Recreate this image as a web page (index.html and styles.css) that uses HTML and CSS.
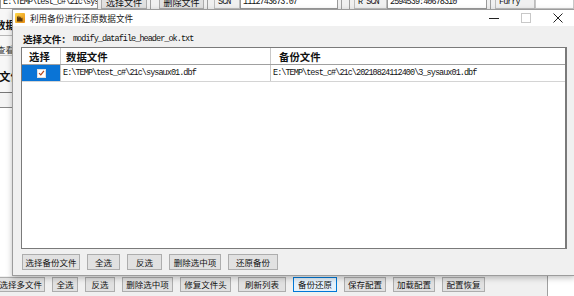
FILE: index.html
```html
<!DOCTYPE html>
<html lang="zh">
<head>
<meta charset="utf-8">
<title>利用备份进行还原数据文件</title>
<link rel="stylesheet" href="styles.css">
</head>
<body>
<div class="app">
  <div class="topbar">
    <div class="field f1 mono">E:\TEMP\test_c#\21c\sysaux01.dbf</div>
    <div class="tbtn b1">选择文件</div>
    <div class="sep"></div>
    <div class="tbtn b2">删除文件</div>
    <div class="sep"></div>
    <div class="lbl l1 mono">SCN</div>
    <div class="field f2 mono">1112743673.07</div>
    <div class="sep"></div>
    <div class="sep"></div>
    <div class="lbl l2 mono">R SCN</div>
    <div class="field f3 mono">2594539:40678310</div>
    <div class="sep"></div>
    <div class="lbl l3 mono">Furry</div>
    <div class="field f4"></div>
  </div>
  <div class="main">
    <div class="side">
      <div class="side-a">数据</div>
      <div class="side-b">查看</div>
      <div class="side-c">文件</div>
      <div class="side-list">
        <div class="side-head"></div>
      </div>
    </div>
  </div>
  <div class="bottombar">
    <div class="bbtn w-45 cut">选择多文件</div>
    <div class="bbtn w-24">全选</div>
    <div class="bbtn w-30">反选</div>
    <div class="bbtn w-51">删除选中项</div>
    <div class="bbtn w-51">修复文件头</div>
    <div class="bbtn w-48">刷新列表</div>
    <div class="bbtn w-44 focus">备份还原</div>
    <div class="bbtn w-42">保存配置</div>
    <div class="bbtn w-42">加载配置</div>
    <div class="bbtn w-43">配置恢复</div>
    <div class="bspacer"></div>
    <div class="bwhite"></div>
  </div>
</div>

<div class="dialog">
  <div class="titlebar">
    <svg class="appicon" width="10" height="10" viewBox="0 0 10 10">
      <defs>
        <linearGradient id="g" x1="0" y1="0" x2="1" y2="1">
          <stop offset="0" stop-color="#ffd84a"/>
          <stop offset="1" stop-color="#e58a12"/>
        </linearGradient>
      </defs>
      <rect x="0" y="0" width="10" height="10" rx="1" fill="url(#g)"/>
      <path d="M2 8.5 L2 4 L3.5 2.5 L3.5 5 L4.5 3 L5 5 L6 3.2 L6.3 5.5 L7.5 4.5 L7.6 8.5 Z" fill="#5a3a10"/>
    </svg>
    <span class="title">利用备份进行还原数据文件</span>
    <div class="controls">
      <div class="ctl"><svg width="10" height="10" viewBox="0 0 10 10"><path d="M0 5.5 H10" stroke="#222" stroke-width="1"/></svg></div>
      <div class="ctl"><svg width="10" height="10" viewBox="0 0 10 10"><rect x="0.5" y="0.5" width="9" height="9" fill="none" stroke="#c8c8c8" stroke-width="1"/></svg></div>
      <div class="ctl"><svg width="10" height="10" viewBox="0 0 10 10"><path d="M0.5 0.5 L9.5 9.5 M9.5 0.5 L0.5 9.5" stroke="#222" stroke-width="1"/></svg></div>
    </div>
  </div>
  <div class="dlg-body">
    <div class="filerow"><span class="filelbl">选择文件：</span><span class="mono filename">modify_datafile_header_ok.txt</span></div>
    <div class="grid">
      <div class="row head">
        <div class="c c1">选择</div>
        <div class="c c2">数据文件</div>
        <div class="c c3">备份文件</div>
      </div>
      <div class="row data">
        <div class="c c1 sel"><span class="chk"><svg width="8" height="8" viewBox="0 0 8 8"><path d="M1.2 4.2 L3.2 6.2 L6.8 1.6" fill="none" stroke="#b5471c" stroke-width="1.4"/></svg></span></div>
        <div class="c c2 mono">E:\TEMP\test_c#\21c\sysaux01.dbf</div>
        <div class="c c3 mono">E:\TEMP\test_c#\21c\20210824112400\3_sysaux01.dbf</div>
      </div>
    </div>
    <div class="btnrow">
      <div class="btn w-58">选择备份文件</div>
      <div class="btn w-33">全选</div>
      <div class="btn w-36">反选</div>
      <div class="btn w-52">删除选中项</div>
      <div class="btn w-50">还原备份</div>
    </div>
  </div>
</div>
</body>
</html>
```

FILE: styles.css
```css
html, body {
  margin: 0;
  padding: 0;
}
body {
  width: 574px;
  height: 296px;
  overflow: hidden;
  position: relative;
  background: #f0f0f0;
  font-family: "Noto Sans CJK SC", "Noto Sans", sans-serif;
  color: #111;
}
.mono {
  font-family: "Liberation Mono", "DejaVu Sans Mono", monospace;
  font-size: 8.5px;
  letter-spacing: -0.95px;
}

/* background application */
.app {
  display: flex;
  flex-direction: column;
  height: 296px;
}
.topbar {
  height: 9px;
  flex: none;
  overflow: hidden;
  display: flex;
  align-items: flex-end;
  background: #f0f0f0;
}
.topbar > div {
  height: 13px;
  box-sizing: border-box;
  line-height: 11px;
  white-space: nowrap;
  overflow: hidden;
  flex: none;
}
.field {
  background: #fff;
  border: 1px solid #9a9a9a;
  padding-left: 2px;
}
.tbtn {
  background: #e1e1e1;
  border: 1px solid #adadad;
  font-size: 9px;
  text-align: center;
}
.lbl {
  border: 1px solid #bdbdbd;
  padding-left: 3px;
}
.sep {
  width: 2px;
  border-left: 1px solid #a0a0a0;
  margin: 0 3px;
}
.f1 { width: 98px; }
.b1 { width: 46px; margin-left: 3px; }
.b2 { width: 45px; margin-left: 4px; }
.l1 { width: 26px; margin-left: 2px; }
.f2 { width: 98px; }
.l2 { width: 33px; }
.f3 { width: 100px; }
.l3 { width: 40px; }
.f4 { flex: 1 !important; border-color: #c8c8c8; }

.main {
  flex: 1;
  display: flex;
}
.side {
  width: 12px;
  display: flex;
  flex-direction: column;
  overflow: hidden;
  background: #f7f7f7;
  border-right: 1px solid #9a9a9a;
}
.side-a {
  height: 27px;
  box-sizing: border-box;
  font-size: 10.5px;
  font-weight: bold;
  line-height: 12px;
  padding-top: 10px;
  margin-left: -5px;
  white-space: nowrap;
  border-bottom: 1px solid #b8b8b8;
}
.side-b {
  height: 20px;
  box-sizing: border-box;
  font-size: 8.5px;
  line-height: 10px;
  padding-top: 8px;
  margin-left: -3px;
  white-space: nowrap;
  color: #333;
  border-bottom: 1px solid #c8c8c8;
}
.side-c {
  height: 36px;
  box-sizing: border-box;
  font-size: 11.5px;
  font-weight: bold;
  line-height: 13px;
  padding-top: 14px;
  margin-left: -1px;
  white-space: nowrap;
}
.side-list {
  flex: 1;
  background: #fff;
  border-top: 1px solid #777;
}
.side-head {
  height: 14px;
  border-bottom: 1px solid #888;
  background: #f4f4f4;
}

.bottombar {
  height: 20px;
  flex: none;
  display: flex;
  align-items: flex-start;
  padding-top: 1px;
  box-sizing: border-box;
  gap: 7px;
}
.bbtn {
  height: 15px;
  box-sizing: border-box;
  background: #e1e1e1;
  border: 1px solid #adadad;
  font-size: 8.5px;
  line-height: 13px;
  text-align: center;
  white-space: nowrap;
  overflow: hidden;
  flex: none;
}
.bbtn.cut {
  margin-left: -4px;
  text-align: right;
  padding-right: 2px;
}
.bbtn.focus {
  border: 1px solid #0078d7;
  background: #e5f1fb;
}
.bspacer {
  width: 48px;
  flex: none;
}
.bwhite {
  flex: 1;
  height: 20px;
  background: #fff;
  border-left: 1px solid #a0a0a0;
  margin-top: -1px;
}
.w-24 { width: 26px; }
.w-30 { width: 30px; }
.w-42 { width: 42px; }
.w-43 { width: 43px; }
.w-44 { width: 44px; }
.w-45 { width: 49px; }
.w-48 { width: 48px; }
.w-51 { width: 51px; }

/* dialog window */
.dialog {
  position: absolute;
  left: 12px;
  top: 9px;
  width: 563px;
  height: 267px;
  box-sizing: border-box;
  border: 1px solid #9c9c9c;
  background: #f0f0f0;
  box-shadow: 0 2px 6px rgba(0, 0, 0, 0.25);
  display: flex;
  flex-direction: column;
}
.titlebar {
  height: 16px;
  flex: none;
  background: #fff;
  display: flex;
  align-items: center;
  padding-left: 2px;
}
.appicon {
  flex: none;
  margin-top: 0px;
}
.title {
  font-size: 8.6px;
  margin-left: 5px;
  color: #222;
  white-space: nowrap;
}
.controls {
  margin-left: auto;
  display: flex;
  height: 100%;
}
.ctl {
  width: 32px;
  display: flex;
  align-items: center;
  justify-content: center;
}
.dlg-body {
  flex: 1;
  display: flex;
  flex-direction: column;
  padding: 5px 7px 0 8px;
}
.filerow {
  height: 16px;
  display: flex;
  align-items: center;
  white-space: nowrap;
}
.filelbl {
  font-size: 9.6px;
  font-weight: bold;
  margin-left: 2px;
}
.filename {
  margin-left: 2px;
}
.grid {
  height: 202px;
  box-sizing: border-box;
  border: 1px solid #7a7a7a;
  border-right-width: 2px;
  background: #fff;
  display: flex;
  flex-direction: column;
}
.row {
  display: grid;
  grid-template-columns: 39px 210px 1fr;
  height: 16px;
}
.row.head {
  border-bottom: 1px solid #a0a0a0;
}
.row.data {
  border-bottom: 1px solid #d4d4d4;
}
.c {
  box-sizing: border-box;
  border-right: 1px solid #c8c8c8;
  white-space: nowrap;
  overflow: hidden;
  display: flex;
  align-items: center;
}
.c3 { border-right: none; }
.head .c {
  font-size: 10.4px;
  font-weight: bold;
  padding-left: 7px;
}
.head .c2 { padding-left: 5px; }
.head .c3 { padding-left: 8px; }
.data .c { padding-left: 2px; }
.data .c1 {
  justify-content: center;
  padding-left: 0;
}
.sel {
  background: #0a74d6;
}
.chk {
  width: 9px;
  height: 9px;
  box-sizing: border-box;
  background: #fff;
  border: 1px solid #e0e0e0;
  display: flex;
  align-items: center;
  justify-content: center;
}
.btnrow {
  display: flex;
  gap: 7px;
  margin-top: 5px;
  padding-left: 1px;
}
.btn {
  height: 16px;
  box-sizing: border-box;
  background: #e1e1e1;
  border: 1px solid #adadad;
  font-size: 8.5px;
  line-height: 14px;
  text-align: center;
  white-space: nowrap;
}
.w-58 { width: 58px; }
.w-33 { width: 33px; }
.w-36 { width: 35px; }
.w-52 { width: 52px; }
.w-50 { width: 50px; }
```
